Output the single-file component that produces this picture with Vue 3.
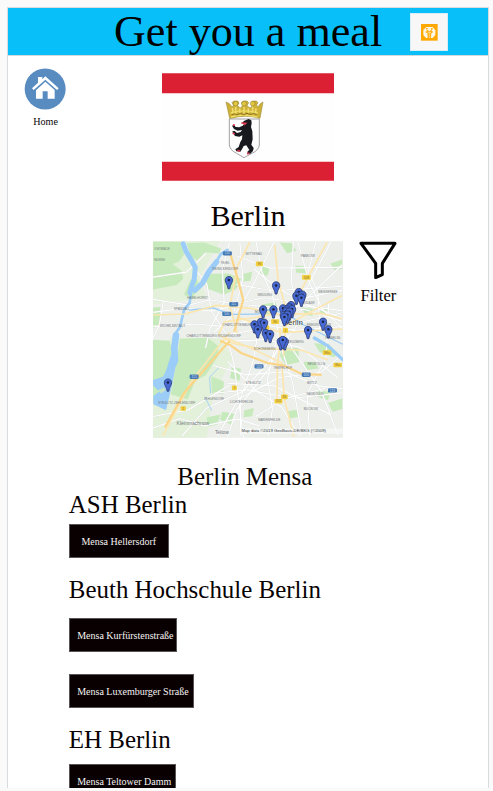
<script setup>
const groups = [
  { name: 'ASH Berlin', kind: 'ash', items: [{ label: 'Mensa Hellersdorf', kind: 'hellersdorf' }] },
  {
    name: 'Beuth Hochschule Berlin',
    kind: 'beuth',
    items: [
      { label: 'Mensa Kurfürstenstraße', kind: 'kurf' },
      { label: 'Mensa Luxemburger Straße', kind: 'lux' },
    ],
  },
  { name: 'EH Berlin', kind: 'eh', items: [{ label: 'Mensa Teltower Damm', kind: 'teltow' }] },
]

const pins = [
  [237, 127], [379, 143], [447, 163], [440, 174], [458, 171], [455, 180],
  [340, 215], [371, 215], [424, 202], [400, 212], [418, 209], [412, 215], [427, 214],
  [409, 221], [419, 222], [402, 232], [413, 231], [404, 238], [333, 253], [343, 255],
  [314, 260], [324, 275], [348, 286], [361, 289], [520, 252], [536, 275],
  [475, 277], [393, 311], [405, 311], [399, 307], [54, 435],
]

const greens = [
  'M9 11h83l10 38-15 22-42 15-36 11z', 'M9 62l57 14 29 22 5 24-20 19-71 13z',
  'M110 15l52-2 52 18-7 15-42-4-24 25-22-17z', 'M160 124l25-17 51-1 38 16-15 31-36 17-51-18z',
  'M121 127l17-9 10 22-20 42-26-12z', 'M90 302l83-3 32 25-1 31-37 58-31 15-23 57-50-16 15-88z',
  'M9 305l50 3 12 41-31 77-31 4z', 'M9 434l28 32-19 30-9 1z', 'M9 208l22-1-2 55-20 9z',
  'M334 200l43-8 5 17-19 20-29-2z', 'M396 329l50 1 2 43-40 8-17-27z',
  'M462 371l33 1 12 20-39 5z', 'M493 316l43 2 31 29-15 11-42-16z',
  'M437 83l29 1 5 22-32-3z', 'M390 13l35 2 15 22-28 8z', 'M543 76l35-12v29l-25 3z',
  'M184 415l38 16-2 37-34-3z', 'M246 386l27 7-4 36-28-9z', 'M217 522l36 6-10 31-32-13z',
  'M457 208l33 5-1 21-23-4z', 'M506 459l37 2-8 26-28-9z', 'M170 539l42-9-10 30-26 7z',
  'M280 108l27-7-5 27-21 2z', 'M506 208l30 5-8 22-24-8z', 'M535 495l43-13v31l-29 9z',
  'M283 518l29-8-5 25-26 3z', 'M413 520l31-5 3 22-29 6z', 'M331 81l29 7-7 25-22-5z',
]

const minor = [
  'M9 184l108 17 63-16 78 12 86-18 73 11 161-34', 'M9 223l94-13 81 9 65-15 89 9 98-13 142 18',
  'M9 265l121-7 85 6 96-15 105 12 162-37', 'M105 12l29 79 37 48 14 82 46 69 21 87 29 224',
  'M239 13l-22 81 6 99-43 79-13 58', 'M319 11l17 89 36 85 15 123 41 124 29 162',
  'M544 11l-69 131-67 127-48 120-99 126-29 85', 'M444 11l36 126 41 80 57 55',
  'M578 80l-128 121-121 72-140 26', 'M203 594l63-111 119-63 129-17 64-53',
  'M189 382l98 28 120-8 96 41 75 9', 'M193 466l101-10 136 25 148-16',
  'M96 595l74-84 109-51 84-96 79-103', 'M273 595l-2-111 39-114 19-112',
  'M480 595l-8-127 57-108 8-166', 'M566 595l-52-137-88-127-38-107',
  'M217 310l131-5 104 24 114 92', 'M233 370l84 87 78 50 56 88', 'M312 92l65 54 91 52 110 42',
  'M373 11l-66 135-48 77-66 59', 'M279 200l189 15 110 35', 'M274 248l163 29 141-11',
  'M260 139l108 19 210-13', 'M9 536l106-20 124-74', 'M257 52l103 38 218-2',
  'M9 117l100-15 60-57', 'M40 189l-12 72-19 39', 'M232 436l142 8 169 87',
  'M355 595l13-81-15-91 26-111', 'M319 535l86-53 121-31', 'M431 11l-7 121 25 76',
  'M498 11l-22 90 29 61 6 130', 'M270 11l9 112-26 97', 'M9 570l81-28 74 22 99-21 69 22',
]

const labels = [
  [13, 35, 'SCHÖNWALDE', 46], [13, 70, 'FALKENSEE', 32], [212, 78, 'TEGEL', 28],
  [187, 96, 'REINICKENDORF', 78], [287, 50, 'WITTENAU', 50], [453, 58, 'PANKOW', 42],
  [112, 183, 'HASELHORST', 62], [71, 215, 'SPANDAU', 46], [29, 268, 'WILHELMSTADT', 77],
  [218, 265, 'CHARLOTTENBURG', 92], [110, 297, 'CHARLOTTENBURG-WILMERSDORF', 163],
  [323, 173, 'WEDDING', 44], [505, 164, 'WEISSENSEE', 58], [449, 199, 'PRENZLAUER', 46],
  [315, 226, 'MOABIT', 38], [471, 265, 'FRIEDRICHSHAIN', 72], [527, 303, 'RUMMELSB.', 46],
  [24, 497, 'STEGLITZ-ZEHLENDORF', 112], [162, 486, 'ZEHLENDORF', 61],
  [240, 496, 'LICHTERFELDE', 70], [312, 335, 'SCHÖNEBERG', 65], [409, 315, 'KREUZBERG', 53],
  [371, 392, 'TEMPELHOF', 56], [473, 380, 'NEUKÖLLN', 53], [472, 439, 'BRITZ', 29],
  [470, 471, 'NEUKÖLLN', 51], [462, 517, 'BUCKOW', 43], [325, 548, 'MARIENFELDE', 67],
  [287, 438, 'STEGLITZ', 46],
]

const blueSigns = [
  [219, 39, '111'], [238, 192, '111'], [217, 221, '100'], [119, 410, '115'],
  [314, 379, '103'], [456, 404, '100'], [535, 451, '113'],
]
const yellowSigns = [
  [318, 70, 22, '96'], [457, 111, 26, '109'], [364, 244, 24, '96'], [399, 270, 16, '1'],
  [519, 337, 26, '96a'], [551, 374, 26, '96a'], [246, 443, 15, '1'], [92, 505, 16, '1'],
  [374, 483, 24, '101'], [394, 470, 20, '96'], [340, 262, 18, '2'],
]
</script>

<template>
  <main class="page">
    <header class="header">
      <h1>Get you a meal</h1>
      <div class="badge">
        <svg width="17" height="17" viewBox="0 0 51 51">
          <path fill="#ffa900" d="M0 0h50v50H0z" />
          <path d="M16 9h19l8 10v14l-8 9H15l-8-9V18z" fill="#fff8e8" />
          <path d="M14 12h7l-2 6h12l-2-6h7l-4 8 5 4-6 4-1 15h-4l-1-12-1 12h-4l-1-15-7-4 6-4z" fill="#ffb01a" />
          <circle cx="25" cy="16" r="5" fill="#fff4d9" />
          <path d="M20 25h10M25 23v12" fill="none" stroke="#ffe2a1" stroke-width="2" />
        </svg>
      </div>
    </header>

    <section class="hero">
      <a class="home">
        <svg width="42" height="42" viewBox="0 0 126 126">
          <circle cx="63.5" cy="63" r="61.5" fill="#588bc0" />
          <path fill="#fff" d="M42 27h13v7l9-9 40 36-5 5-35-31-35 31-5-5 18-17z" />
          <path fill="#fff" d="M64 41l28 25v26H71V70H56v22H36V67z" />
        </svg>
        <span>Home</span>
      </a>
      <svg class="flag" width="172" height="108" viewBox="36 39 516 324">
        <path fill="#fefefe" d="M36 39h516v324H36z" />
        <path fill="#dc2033" d="M36 40h516v60H36zM36 305h516v57H36z" />
        <path d="M238 177h90v78q-2 16-22 25l-24 13-22-13q-20-9-22-25z" fill="#fdfdfd" stroke="#929296" stroke-width="2.5" />
        <path d="M239 175l-11-49 10 5 8 9 5-3-5-9 5-5h12l4 6-5 8 9 7 7-7-4-9 5-5h12l5 5-5 9 9 7 8-7-5-8 4-6h12l5 5-5 8 5 4 7-9 8-5-9 49q-43-12-86 0z" fill="#cdb237" stroke="#907a2b" stroke-width="1.5" />
        <g fill="#e2c943" stroke="#8f792c" stroke-width="1.5">
          <circle cx="257" cy="131" r="7" /><circle cx="282" cy="131" r="7" /><circle cx="308" cy="131" r="7" />
        </g>
        <path d="M247 144l3 17M257 140v22M269 145l1 15M282 141v20M295 145v15M308 140v22M318 145l-2 17" fill="none" stroke="#f0db71" stroke-width="5" />
        <path d="M242 159q40-13 81 0M243 171q39-11 79 0" fill="none" stroke="#f0dc66" stroke-width="4" />
        <path d="M245 165l8-4 8 4 10-5 10 4 10-4 10 4 10-4 9 4" fill="none" stroke="#8b701c" stroke-width="3" />
        <path fill="#18191f" d="M275 189l8-7 13-5 8 4 1 9-2 11 4 13 1 24-4 16 7 10-2 9-8 8h-9l1-7 5-4-9-14-8 2-6 11-4 6-12-1-3-6 10-7 5-15 5-8 1-12-9 4-13-2-6-9-2-5 7-1 7 6 11-3 4-6-13 2-11-5-6-10 6-2 5 6 11 1 10-5 6-7-8-2z" />
        <path d="M274 189l13 1-5 5M249 194l6 2M248 219l6 3M262 271l8 3M291 281l7-1" fill="none" stroke="#df3852" stroke-width="5" />
      </svg>
    </section>

    <h2 class="city">Berlin</h2>

    <section class="map-row">
      <svg class="map" width="190" height="197" viewBox="9 9 571 591">
        <path fill="#ecefea" d="M9 9h571v591H9z" />
        <path fill="#e3f1da" d="M9 9h200l-60 110 20 60-160 20zM60 300h150l40 60-60 110-20 130H9V480z" />
        <g fill="#c6eabb"><path v-for="g in greens" :key="g" :d="g" /></g>
        <g fill="none" stroke="#d8dadb" stroke-width="4.5"><path v-for="r in minor" :key="r" :d="r" /></g>
        <g fill="none" stroke="#fff" stroke-width="3.6"><path v-for="r in minor" :key="r" :d="r" /></g>
        <g fill="none" stroke="#9bcdf8" stroke-linecap="round" stroke-linejoin="round">
          <path stroke-width="15" d="M100 17l8 22 18 30 10 19-3 34-9 27-4 15" />
          <path stroke-width="16" d="M135 157l22-21 19-34 24-31" />
          <path stroke-width="8" d="M195 78l18-31 20-12M123 166l-4 29-16 18-13 54-15 22" />
          <path stroke-width="20" d="M78 292l-5 38 2 38-17 33-17 35" />
          <path stroke-width="4" d="M119 216l69-7 54 20 81-1 37-13 49 11 47 32 122 60" />
          <path stroke-width="10" d="M494 300l38 22 47 43" />
          <path stroke-width="2.5" d="M182 465l-3-47 26-27M185 517l-20-40" />
        </g>
        <path fill="#9bcdf8" d="M9 426l34-11 20-64 20 3-18 94-17 69-38-18v-25l18-13-19-18z" />
        <path fill="#c5e4c8" d="M24 458l16-9 8 7-15 11z" />
        <g fill="none" stroke="#fce6b0" stroke-width="5">
          <path d="M9 231l97-3 92-26 107 9 82 18 127-3 64 16M300 12l-37 72-23 121 22 80M240 283l-59 74-58 75-84 162" />
          <path d="M229 300l79 32 88 43 8 108 28 113M375 20l10 107 26 95-10 133" />
          <path d="M532 12l-73 135-49 103M399 268l92-51 86-45M264 238l131 46 183-11" />
          <path d="M391 270l-2 62-6 44-1 108M208 291l41 25 78 16 127 4 81 30M206 290l18-39 87-12 71-13" />
        </g>
        <path d="M45 569l57-103 120-138 18-19M211 308l28 12 35 25 79 30 50 8 53 25 60 3M241 46l22 74 17 65-27 96" fill="none" stroke="#fbd587" stroke-width="6.5" />
        <g v-for="s in blueSigns" :key="s[0]" class="sign blue">
          <rect :x="s[0]" :y="s[1]" width="27" height="13" rx="4" />
          <text :x="s[0] + 13.5" :y="s[1] + 10">{{ s[2] }}</text>
        </g>
        <g v-for="s in yellowSigns" :key="s[0]" class="sign yellow">
          <rect :x="s[0]" :y="s[1]" :width="s[2]" height="14" rx="3" />
          <text :x="s[0] + s[2] / 2" :y="s[1] + 10.5">{{ s[3] }}</text>
        </g>
        <g class="places">
          <text v-for="(l, i) in labels" :key="i" :x="l[0]" :y="l[1]" :textLength="l[3]" lengthAdjust="spacingAndGlyphs">{{ l[2] }}</text>
        </g>
        <text x="400" y="261" class="center" textLength="59">Berlin</text>
        <text x="80" y="562" class="town" textLength="98">Kleinmachnow</text>
        <text x="195" y="589" class="town" textLength="42">Teltow</text>
        <path fill="#f7f8f7" fill-opacity=".85" d="M270 572h310v16H270z" />
        <text x="275" y="584" class="credit" textLength="254" lengthAdjust="spacingAndGlyphs">Map data ©2019 GeoBasis-DE/BKG (©2009)</text>
        <g v-for="(p, i) in pins" :key="'p' + i" :transform="`translate(${p[0]} ${p[1]})`">
          <path d="M0-12c6.5 0 11 4.7 11 11C11 8 4 11 2.5 25h-5C-4 11-11 8-11-1-11-7.3-6.5-12 0-12z" fill="#4769d4" stroke="#2b3b70" stroke-width="2.5" />
          <circle r="3.8" cy="-1" fill="#19213f" />
        </g>
      </svg>
      <button class="filter">
        <svg width="38" height="38" viewBox="0 0 114 114">
          <path d="M6 7h102L70 67v34l-20 9V67z" fill="none" stroke="#000" stroke-width="9" stroke-linejoin="round" />
        </svg>
        <span>Filter</span>
      </button>
    </section>

    <section class="mensas">
      <h2>Berlin Mensa</h2>
      <div v-for="g in groups" :key="g.name" class="group" :class="g.kind">
        <h3>{{ g.name }}</h3>
        <button v-for="item in g.items" :key="item.label" class="mensa" :class="item.kind">{{ item.label }}</button>
      </div>
    </section>
  </main>
</template>

<style>
body { background: #fafafa; overflow: hidden; }
</style>

<style scoped>
* { box-sizing: border-box; }
h1, h2, h3 { margin: 0; font-weight: 400; }
button { border: 0; background: none; font: inherit; padding: 0; color: inherit; }
svg { display: block; flex: none; }
.page { width: 482px; height: 781px; margin: 7px 0 0 7px; border: 1px solid #d9dcde; border-bottom: 0; background: #fff; overflow: hidden; color: #080203; font-family: "Liberation Serif", serif; }
.header { height: 48px; display: flex; background: #08bff9; border-bottom: 1px solid #d2dadd; padding-left: 106px; color: #000; }
h1 { width: 269px; font-size: 44.1px; line-height: 48px; white-space: nowrap; }
.badge { width: 38px; height: 38px; margin: 5px 0 0 27px; background: #f7f7f7; border: 1px solid #d7eef7; display: flex; align-items: center; justify-content: center; }
.hero { display: flex; height: 125px; padding: 12px 0 0 16px; }
.home { width: 43px; display: flex; flex-direction: column; align-items: flex-start; font-size: 10.1px; line-height: 12px; }
.home span { margin: 6px 0 0 9.2px; }
.flag { margin: 5px 0 0 95px; }
.city { width: 480px; height: 60px; padding-top: 18px; font-size: 30px; line-height: 34px; text-align: center; }
.map-row { display: flex; height: 197px; padding-left: 145px; }
.filter { display: flex; flex-direction: column; align-items: center; align-self: flex-start; margin-left: 16.4px; font-size: 16.6px; line-height: 20px; }
.filter span { margin-top: 7px; }
.places, .center, .town, .credit, .sign { font-family: "Liberation Sans", sans-serif; fill: #737980; }
.places { font-size: 11px; }
.sign text { font-size: 10px; text-anchor: middle; }
.blue rect { fill: #4579b3; }
.blue text { fill: #c9dcef; }
.yellow rect { fill: #f2cf3f; }
.yellow text { fill: #8f7a30; }
.center { font-size: 22px; fill: #40464d; }
.town { font-size: 15px; }
.credit { font-size: 12px; fill: #33383d; }
.mensas { display: flex; flex-direction: column; padding: 25px 0 0 60.8px; font-size: 24.95px; line-height: 28px; }
.mensas h2 { font-size: inherit; padding-left: 108.5px; }
.group { display: flex; flex-direction: column; align-items: flex-start; }
h3 { font-size: inherit; height: 28px; }
.mensa { height: 34px; padding: 1px 0 0 7.4px; background: #080001; color: #f7f3f3; border: 1px solid #585354; font-size: 10px; line-height: 32px; text-align: left; white-space: nowrap; }
.hellersdorf { width: 100.5px; margin-top: 5px; padding-left: 11.6px; }
.beuth { margin-top: 18px; }
.kurf { width: 108.4px; margin-top: 14px; }
.lux { width: 125.2px; margin-top: 22px; }
.eh { margin-top: 18px; }
.teltow { width: 107.2px; margin-top: 10px; }
</style>
